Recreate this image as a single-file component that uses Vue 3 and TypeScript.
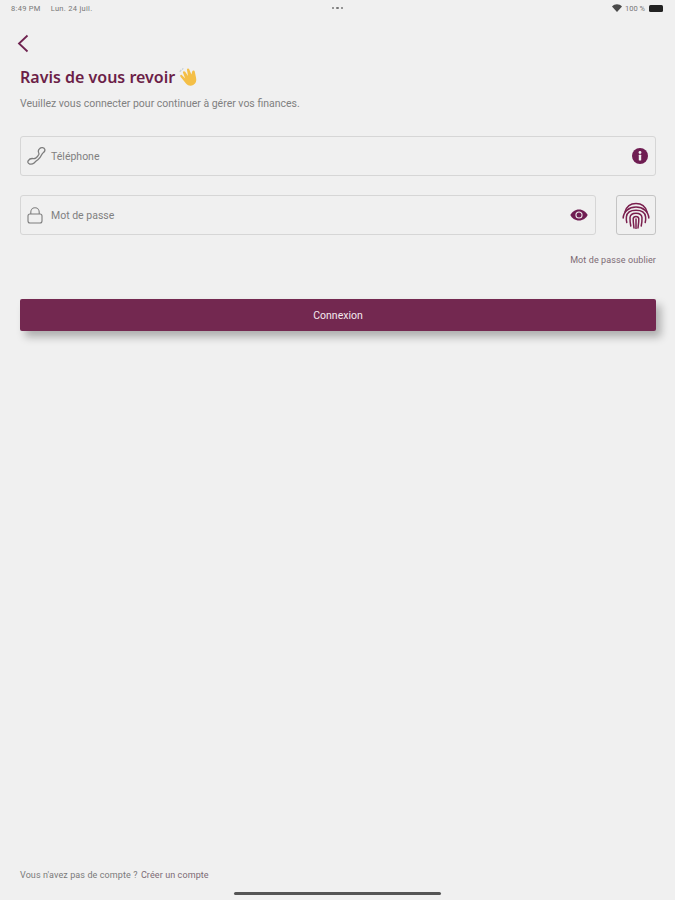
<script setup lang="ts">
const fingerprintArcs: string[] = [
  'M3 11C4.500 5.500 8.800 2.500 14 2.500s9.500 3 11 8.500',
  'M1.200 17C1.500 10.500 7 6 14 6s12.500 4.500 12.800 11',
  'M4.800 21.500c-.5-1.900-.6-3.800-.4-5.700C5 11.500 9 9.300 14 9.300s9 2.200 9.600 6.500c.2 1.900.1 3.800-.4 5.700',
  'M8.800 25c-.6-2.800-.9-5.600-.8-8.400C8.300 13.800 10.800 12.300 14 12.300s5.700 1.500 6 4.300c.1 2.800-.2 5.600-.8 8.400',
  'M12 27c-.4-3.200-.9-6.500-.8-9.400.1-1.400 1.300-2.200 2.800-2.200s2.700.8 2.800 2.200c.1 2.900-.4 6.200-.8 9.400',
  'M14 18v9.500',
]
</script>

<template>
  <div class="page">
    <header class="status">
      <div class="status-left"><span>8:49 PM</span><span>Lun. 24 juil.</span></div>
      <div class="dots"><i></i><i></i><i></i></div>
      <div class="status-right">
        <svg width="10" height="8" viewBox="0 0 10 8"><path d="M0 2.400C2.800-.5 7.200-.5 10 2.400L5 8z" fill="#4a4a4a"/></svg>
        <span>100 %</span>
        <span class="battery"><b></b></span>
      </div>
    </header>

    <button class="back" aria-label="Retour">
      <svg width="12" height="19" viewBox="0 0 12 19"><path d="M10.500 1.500 2 9.500l8.500 8" fill="none" stroke="#6f2350" stroke-width="1.800"/></svg>
    </button>

    <main class="content">
      <h1 class="title">Ravis de vous revoir
        <svg class="wave" width="20" height="20" viewBox="0 0 20 20">
          <path d="M2.800 8 6.200 11.500 4 5.800c-.5-1.500 1.400-2.300 2.200-1L9 9 8 3c-.3-1.500 1.700-2 2.300-.6l2.100 5.100.8-3c.4-1.400 2.500-1.200 2.600.3l1.300 6.200c.6 3-.2 5.300-2.500 6.800-2.600 1.600-5.600 1.100-7.400-1L1.500 9.700c-1-1.300.4-2.700 1.300-1.700z" fill="#f4bf47"/>
          <path d="M.8 4.800 2.300 2.800M3.300 2.600l.9-1.400" stroke="#c4cfd6" stroke-width="1.200" fill="none"/>
        </svg>
      </h1>
      <p class="subtitle">Veuillez vous connecter pour continuer à gérer vos finances.</p>

      <div class="field phone-field">
        <svg class="lead" width="20" height="20" viewBox="0 0 20 20"><path d="M12.800 2.500c1.300-1.400 4.500-1 5 .8.400 1.500-.5 2.700-1.600 3.400-.9.600-1.200 1.300-1.700 2.400-.9 1.900-1.800 3.500-3.600 4.700-1.500 1-2.300 1.700-3.800 3.100-1.200 1.100-3.100 1.500-4.600 1.100C1 17.500.4 15.900 1.300 14.600c1-1.500 3.100-2.300 4.900-2 1 .2 1.500.1 2.500-.5 1.700-1 2.500-2.200 3.200-3.800.2-.6 0-1.100-.3-1.800-.5-1.300-.2-2.900 1.200-4z" fill="none" stroke="#7d7d7d" stroke-width="1.300"/></svg>
        <span class="placeholder">Téléphone</span>
        <svg class="trail" width="16" height="16" viewBox="0 0 16 16"><circle cx="8" cy="8" r="8" fill="#6f1d52"/><rect x="6.800" y="6.800" width="2.400" height="5.800" rx=".5" fill="#f0f0f0"/><circle cx="8" cy="4.500" r="1.400" fill="#f0f0f0"/></svg>
      </div>

      <div class="password-row">
        <div class="field password-field">
          <svg class="lead" width="16" height="17" viewBox="0 0 16 17"><rect x="1" y="7" width="14" height="9" rx="2" fill="none" stroke="#7d7d7d" stroke-width="1.100"/><path d="M3.800 7V5a4.200 4.200 0 0 1 8.400 0v2" fill="none" stroke="#7d7d7d" stroke-width="1.100"/></svg>
          <span class="placeholder">Mot de passe</span>
          <svg class="trail eye" width="18" height="12" viewBox="0 0 18 12"><path d="M9 .5C5 .5 1.800 3 .3 6 1.800 9 5 11.500 9 11.500S16.200 9 17.700 6C16.200 3 13 .5 9 .5z" fill="#6f1d52"/><circle cx="9" cy="6" r="3.600" fill="#f0f0f0"/><circle cx="9" cy="6" r="2.500" fill="#6f1d52"/></svg>
        </div>
        <button class="finger" aria-label="Empreinte">
          <svg width="28" height="28" viewBox="0 0 28 28">
            <path v-for="d in fingerprintArcs" :key="d" :d="d" fill="none" stroke="#7a1f4e" stroke-width="1.500" stroke-linecap="round"/>
          </svg>
        </button>
      </div>

      <div class="forgot">Mot de passe oublier</div>
      <button class="submit">Connexion</button>
    </main>

    <footer class="footer">Vous n'avez pas de compte ? <span class="link">Créer un compte</span></footer>
    <div class="home-wrap"><div class="home"></div></div>
  </div>
</template>

<style>
body { margin: 0; background: #f0f0f0; }
</style>

<style scoped>
.page {
  width: 675px;
  height: 900px;
  box-sizing: border-box;
  display: flex;
  flex-direction: column;
  background: #f0f0f0;
  font-family: Roboto, "Liberation Sans", sans-serif;
  overflow: hidden;
}
.status {
  height: 16px;
  display: grid;
  grid-template-columns: 1fr auto 1fr;
  align-items: center;
  padding: 0 11px;
  font-size: 7.500px;
  color: #777;
}
.status-left { display: flex; gap: 10px; letter-spacing: 0.3px; }
.status-right { display: flex; justify-content: flex-end; align-items: center; gap: 3px; }
.dots { display: flex; gap: 2px; }
.dots i { width: 2.500px; height: 2.500px; border-radius: 50%; background: #777; }
.battery { width: 14px; height: 7px; border-radius: 1.500px; background: #222; margin-left: 1px; margin-right: 1px; }
.back {
  width: 14px;
  height: 20px;
  margin: 18px 0 0 16px;
  padding: 0;
  border: 0;
  background: none;
  display: block;
}
.content { padding: 0 19px 0 20px; display: flex; flex-direction: column; }
.title {
  margin: 13px 0 0;
  font-family: "Noto Sans", sans-serif;
  font-size: 16px;
  line-height: 20px;
  font-weight: 600;
  color: #6c1f48;
  display: flex;
  align-items: center;
  gap: 4px;
}
.subtitle { margin: 10px 0 0; font-size: 10.500px; line-height: 14px; color: #808080; }
.field {
  box-sizing: border-box;
  height: 40px;
  border: 1px solid #d6d6d6;
  border-radius: 3px;
  display: flex;
  align-items: center;
  padding: 0 7px 0 6px;
}
.phone-field { margin-top: 25px; }
.password-row { display: flex; gap: 20px; margin-top: 19px; }
.password-field { flex: 1; }
.lead { flex: none; }
.placeholder { margin-left: 4px; font-size: 10.500px; color: #808080; flex: 1; }
.password-field .placeholder { margin-left: 8px; }
.finger {
  box-sizing: border-box;
  width: 40px;
  height: 40px;
  border: 1px solid #c4c4c4;
  border-radius: 3px;
  background: none;
  padding: 0;
  display: flex;
  align-items: center;
  justify-content: center;
}
.forgot { margin-top: 19px; height: 12px; line-height: 12px; text-align: right; font-size: 9px; letter-spacing: 0.1px; color: #7c6a74; }
.submit {
  margin-top: 33px;
  height: 32px;
  border: 0;
  border-radius: 2px;
  background: #732850;
  color: #f3e9ee;
  font-family: Roboto, sans-serif;
  font-size: 10.500px;
  padding: 0;
  box-shadow: 5px 6px 8px rgba(0, 0, 0, 0.28);
}
.footer {
  margin-top: auto;
  padding-left: 20px;
  font-size: 9px;
  line-height: 12px;
  letter-spacing: 0.1px;
  color: #7a7a7a;
}
.link { color: #7c6a74; margin-left: 1px; }
.home-wrap { height: 19px; display: flex; justify-content: center; align-items: flex-start; padding-top: 11px; box-sizing: border-box; }
.home { width: 207px; height: 3px; border-radius: 2px; background: #555; }
</style>
